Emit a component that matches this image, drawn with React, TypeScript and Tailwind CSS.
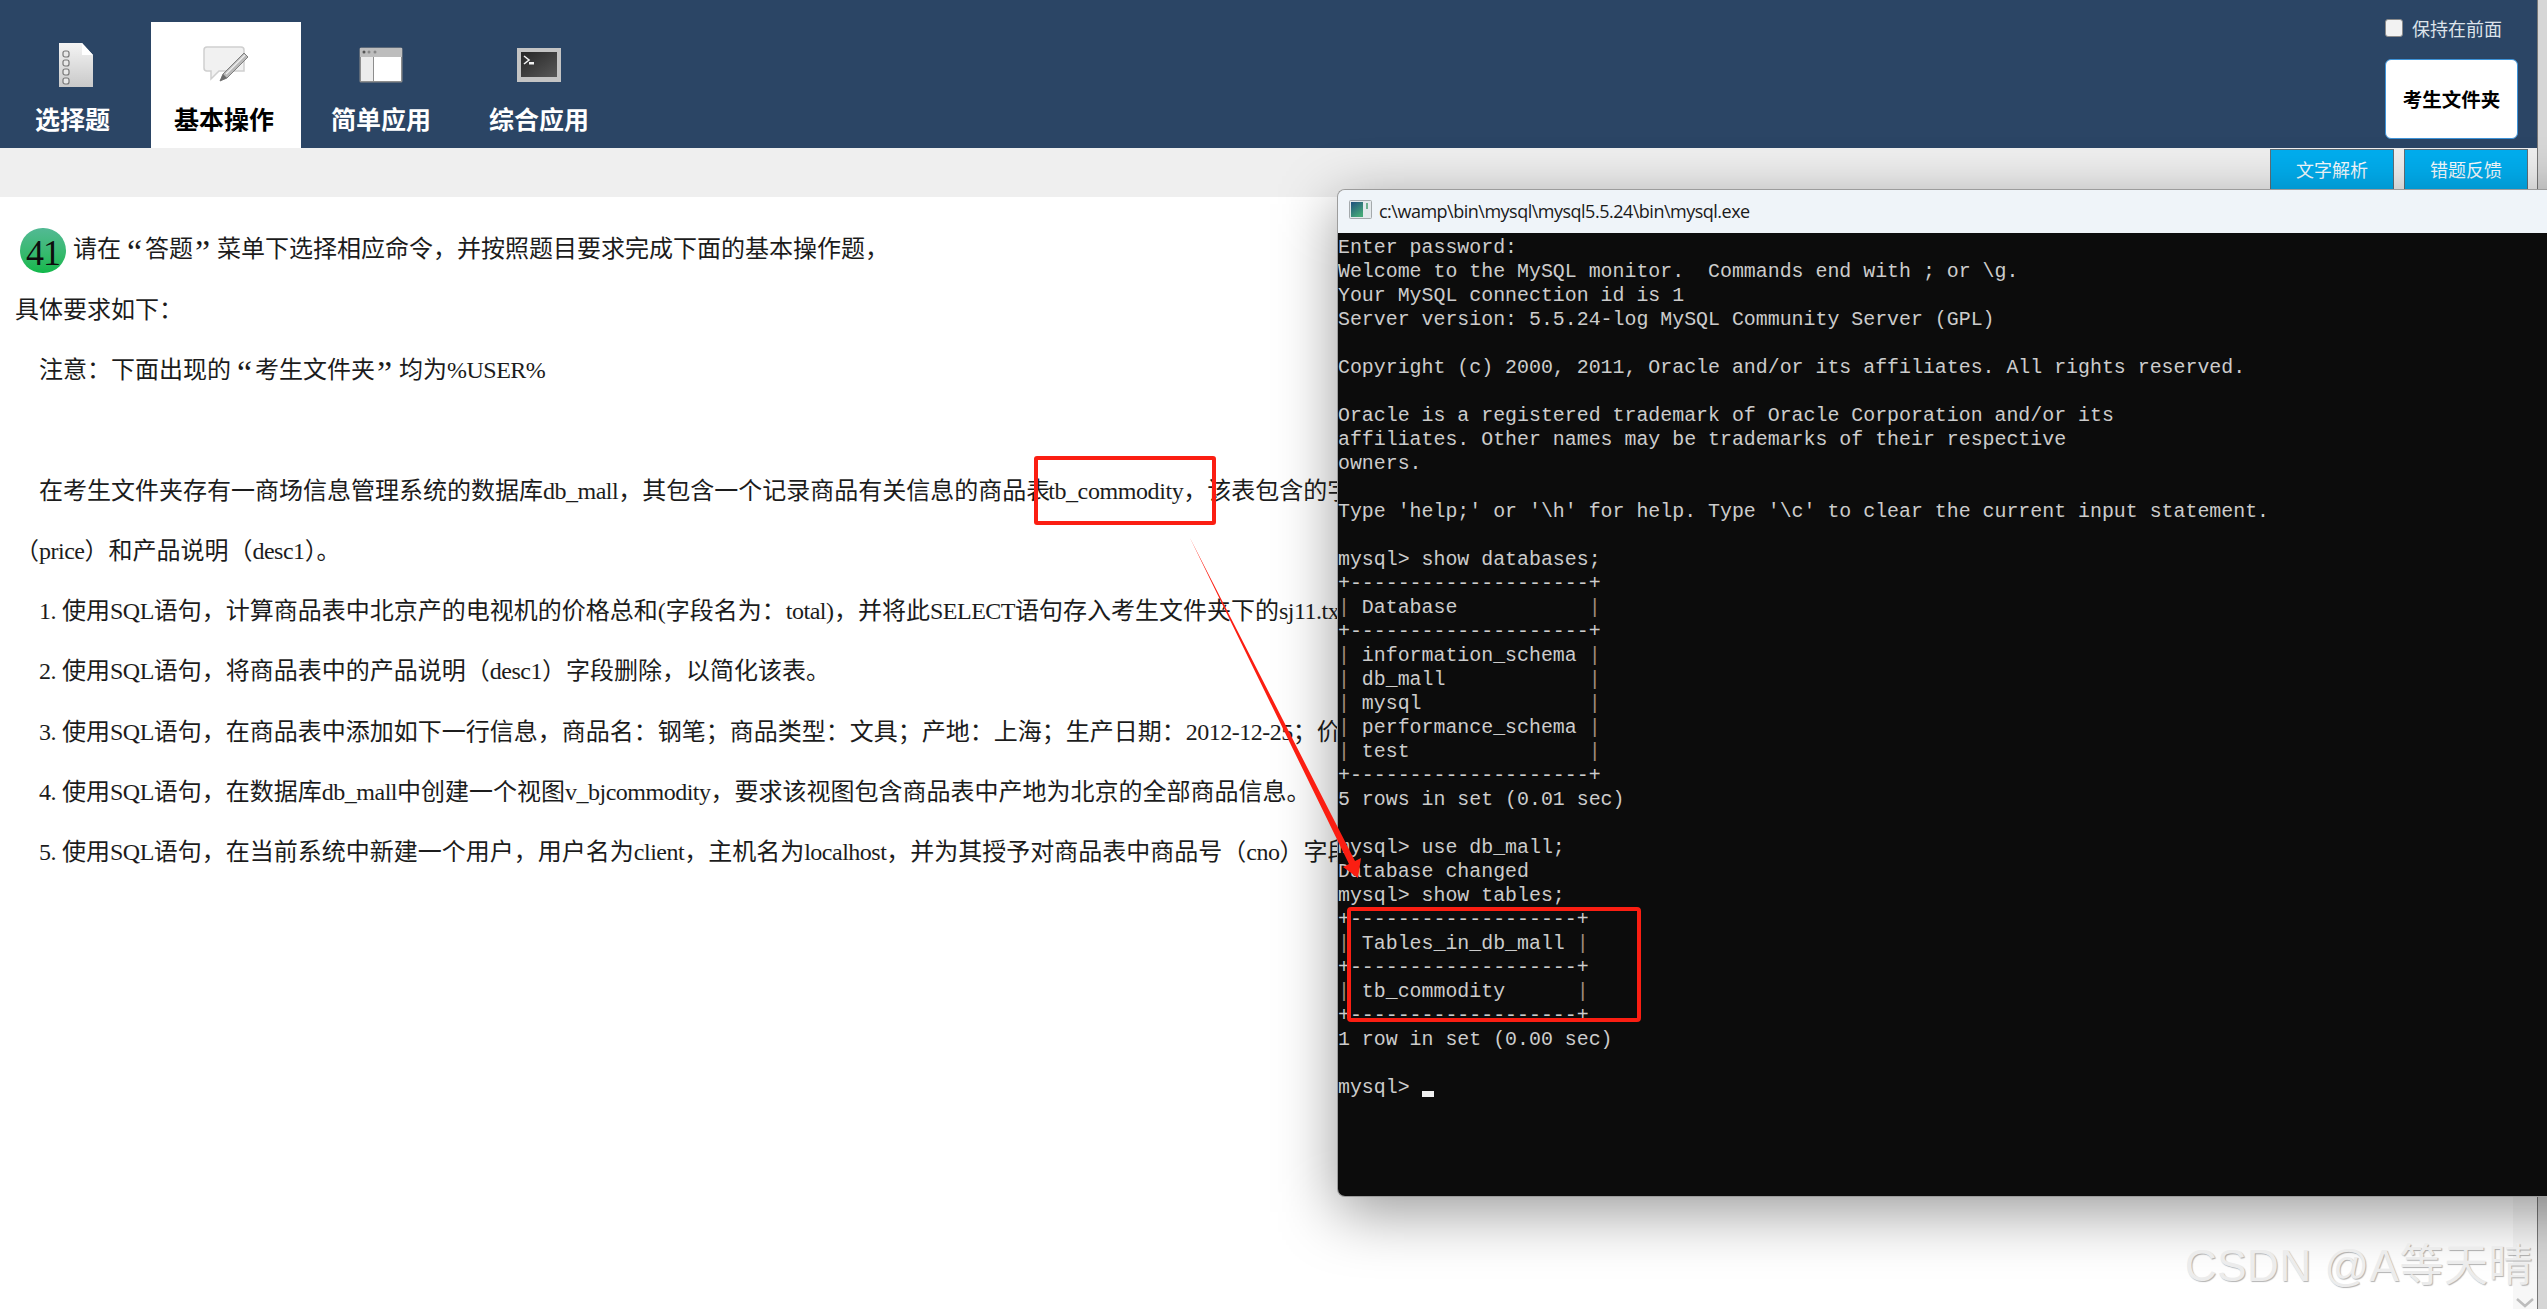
const terminalLines = [
  "Enter password:",
  "Welcome to the MySQL monitor.  Commands end with ; or \\g.",
  "Your MySQL connection id is 1",
  "Server version: 5.5.24-log MySQL Community Server (GPL)",
  "",
  "Copyright (c) 2000, 2011, Oracle and/or its affiliates. All rights reserved.",
  "",
  "Oracle is a registered trademark of Oracle Corporation and/or its",
  "affiliates. Other names may be trademarks of their respective",
  "owners.",
  "",
  "Type 'help;' or '\\h' for help. Type '\\c' to clear the current input statement.",
  "",
  "mysql> show databases;",
  "+--------------------+",
  "| Database           |",
  "+--------------------+",
  "| information_schema |",
  "| db_mall            |",
  "| mysql              |",
  "| performance_schema |",
  "| test               |",
  "+--------------------+",
  "5 rows in set (0.01 sec)",
  "",
  "mysql> use db_mall;",
  "Database changed",
  "mysql> show tables;",
  "+-------------------+",
  "| Tables_in_db_mall |",
  "+-------------------+",
  "| tb_commodity      |",
  "+-------------------+",
  "1 row in set (0.00 sec)",
  "",
];

const questionLines = [
  "具体要求如下：",
  "　注意：下面出现的“考生文件夹”均为%USER%",
  "\u00a0",
  "　在考生文件夹存有一商场信息管理系统的数据库db_mall，其包含一个记录商品有关信息的商品表tb_commodity，该表包含的字",
  "（price）和产品说明（desc1）。",
  "　1. 使用SQL语句，计算商品表中北京产的电视机的价格总和(字段名为：total)，并将此SELECT语句存入考生文件夹下的sj11.txt",
  "　2. 使用SQL语句，将商品表中的产品说明（desc1）字段删除，以简化该表。",
  "　3. 使用SQL语句，在商品表中添加如下一行信息，商品名：钢笔；商品类型：文具；产地：上海；生产日期：2012-12-25；价",
  "　4. 使用SQL语句，在数据库db_mall中创建一个视图v_bjcommodity，要求该视图包含商品表中产地为北京的全部商品信息。",
  "　5. 使用SQL语句，在当前系统中新建一个用户，用户名为client，主机名为localhost，并为其授予对商品表中商品号（cno）字段",
];

function DocIcon() {
  return (
    <svg className="blur-[0.5px]" width="36" height="46" viewBox="0 0 36 46">
      <defs>
        <linearGradient id="docFill" x1="0" y1="0" x2="0" y2="1">
          <stop offset="0" stopColor="#f4f4f4" />
          <stop offset="1" stopColor="#c9c9c9" />
        </linearGradient>
      </defs>
      <path d="M1 1H24L35 13V45H1Z" fill="url(#docFill)" />
      <path d="M24 1L35 13H24Z" fill="#ffffff" />
      {[9, 18, 27, 36].map((y) => (
        <rect key={y} x="5" y={y} width="6" height="6" rx="2" fill="#e8e8e8" stroke="#777" strokeWidth="1.2" />
      ))}
    </svg>
  );
}

function NoteIcon() {
  return (
    <svg className="blur-[0.5px]" width="46" height="38" viewBox="0 0 46 38">
      <path d="M4 1H38Q41 1 41 4V25H16L8 33V25H4Q1 25 1 22V4Q1 1 4 1Z" fill="#f1f1f1" stroke="#cfcfcf" strokeWidth="1.5" />
      <path d="M17 35L20 28L41 7L45 11L24 32Z" fill="#b9b9b9" stroke="#808080" strokeWidth="1" />
      <path d="M17 35L20 28L24 32Z" fill="#6a6a6a" />
      <path d="M23 28L42 9" stroke="#eeeeee" strokeWidth="1.5" />
    </svg>
  );
}

function WindowIcon() {
  return (
    <svg className="blur-[0.5px]" width="44" height="36" viewBox="0 0 44 36">
      <rect x="0.5" y="0.5" width="43" height="35" rx="1.5" fill="#8d8d8d" />
      <rect x="1" y="1" width="42" height="9" fill="#bdbdbd" />
      <circle cx="5" cy="5" r="1.5" fill="#555" />
      <circle cx="10" cy="5" r="1.5" fill="#888" />
      <circle cx="16" cy="5" r="1.5" fill="#888" />
      <rect x="2" y="10" width="12" height="24" fill="#ececec" />
      <rect x="15" y="10" width="27" height="24" fill="#ffffff" />
    </svg>
  );
}

function TerminalIcon() {
  return (
    <svg className="blur-[0.5px]" width="44" height="34" viewBox="0 0 44 34">
      <defs>
        <linearGradient id="termFill" x1="0" y1="0" x2="1" y2="1">
          <stop offset="0" stopColor="#262626" />
          <stop offset="1" stopColor="#585858" />
        </linearGradient>
      </defs>
      <rect width="44" height="34" fill="#c4c4c4" />
      <rect x="4" y="4" width="36" height="25" fill="url(#termFill)" />
      <path d="M7 8L12 12L7 16" fill="none" stroke="#f2f2f2" strokeWidth="1.6" />
      <rect x="12" y="14" width="5" height="2.5" fill="#f2f2f2" />
    </svg>
  );
}

function ConsoleIcon() {
  return (
    <svg className="mb-[4px]" width="23" height="19" viewBox="0 0 23 19">
      <defs>
        <linearGradient id="consoleFill" x1="0" y1="0" x2="0.6" y2="1">
          <stop offset="0" stopColor="#1f4f7d" />
          <stop offset="1" stopColor="#45a878" />
        </linearGradient>
      </defs>
      <rect x="0.5" y="0.5" width="22" height="18" rx="1" fill="#e4e9ec" stroke="#a4a9ac" />
      <rect x="2" y="2" width="12" height="15" fill="url(#consoleFill)" />
      <rect x="17" y="3" width="2" height="6" fill="#6fb08f" />
    </svg>
  );
}

function NavTab({ label, width, labelClass, active, children }: { label: string; width: string; labelClass?: string; active?: boolean; children: React.ReactNode }) {
  return (
    <div className={`${width} ${active ? "bg-white text-black" : "text-white"} h-[126px] flex flex-col items-center pt-[20px]`}>
      <div className="h-[46px] flex items-center justify-center">{children}</div>
      <div className={`mt-[15px] text-[25px] leading-[30px] font-bold ${labelClass ?? ""}`}>{label}</div>
    </div>
  );
}

// latin runs sit tighter than the default metrics, quotes take a full cell
function RichText({ text }: { text: string }) {
  const parts = text.split(/([“”]|[A-Za-z0-9_.%\-]+)/);
  return (
    <>
      {parts.map((part, i) => {
        if (part === "“") {
          return <span key={i} className="inline-block w-[24px] text-right pr-[3px] text-[34px] leading-none align-[-6px]">{part}</span>;
        }
        if (part === "”") {
          return <span key={i} className="inline-block w-[24px] text-left pl-[2px] text-[34px] leading-none align-[-6px]">{part}</span>;
        }
        if (part === "tb_commodity") {
          return <span key={i} className="-ml-[2px] tracking-[-0.4px]">{part}</span>;
        }
        if (/^[A-Za-z0-9_.%\-]+$/.test(part)) {
          return <span key={i} className="tracking-[-0.5px]">{part}</span>;
        }
        return part;
      })}
    </>
  );
}

function TerminalLine({ text }: { text: string }) {
  const parts = text.split(/(\|)/);
  return (
    <div className="h-[24px]">
      {parts.map((part, i) => (part === "|" ? <span key={i} className="text-[#a08c7c]">|</span> : part))}
    </div>
  );
}

export default function App() {
  return (
    <div className="relative w-[2547px] h-[1309px] overflow-hidden flex bg-white font-['Liberation_Serif','Noto_Sans_CJK_SC',serif] text-[#1c1c1c]">
      <div className="w-[2537px] flex flex-col">
        {/* Top nav */}
        <header className="h-[148px] bg-[#2b4565] flex items-end justify-between font-['Noto_Sans_CJK_SC',sans-serif]">
          <nav className="flex">
            <NavTab label="选择题" width="w-[151px]" labelClass="-ml-[6px]"><DocIcon /></NavTab>
            <NavTab label="基本操作" width="w-[150px]" labelClass="-ml-[4px]" active><NoteIcon /></NavTab>
            <NavTab label="简单应用" width="w-[160px]"><WindowIcon /></NavTab>
            <NavTab label="综合应用" width="w-[156px]"><TerminalIcon /></NavTab>
          </nav>
          <div className="w-[133px] mr-[19px] mb-[9px] flex flex-col">
            <label className="flex items-center gap-[9px] text-[18px] leading-[20px] text-[#dde3ea]">
              <span className="w-[18px] h-[18px] rounded-[3px] bg-[#f2f2f2] border border-[#8a8a8a]" />
              保持在前面
            </label>
            <button className="mt-[21px] h-[80px] rounded-[6px] bg-white border border-[#3d93d8] text-[19.5px] font-bold text-black">
              考生文件夹
            </button>
          </div>
        </header>

        {/* Gray toolbar */}
        <div className="h-[49px] bg-[#efefef] flex justify-end items-start pt-[1px] pr-[9px] gap-[10px] font-['Noto_Sans_CJK_SC',sans-serif]">
          <button className="w-[124px] h-[41px] bg-[#00aeef] border border-[#5f6f78] text-[18px] text-[#f4fbff]">文字解析</button>
          <button className="w-[124px] h-[41px] bg-[#00aeef] border border-[#5f6f78] text-[18px] text-[#f4fbff]">错题反馈</button>
        </div>

        {/* Question text */}
        <main className="flex-1 flex min-h-0">
          <div className="flex-1 min-w-0 overflow-hidden pt-[23px] pl-[15px] text-[24px]">
            <div className="h-[60.2px] flex items-center -ml-[15px] pl-[20px]">
              <span className="w-[46px] h-[45px] rounded-full bg-gradient-to-b from-[#52b994] to-[#0fb84a] flex items-center justify-center text-[36px] leading-[45px] pt-[6px] tracking-[-1px] text-[#0d0d0d]">41</span>
              <span className="ml-[7px] whitespace-pre">
                <RichText text="请在“答题”菜单下选择相应命令，并按照题目要求完成下面的基本操作题，" />
              </span>
            </div>
            {questionLines.map((line, i) => (
              <div key={i} className="h-[60.2px] leading-[60.2px] whitespace-pre">
                <RichText text={line} />
              </div>
            ))}
          </div>
          <div className="w-[24px] bg-[#f7f7f7] flex flex-col justify-end items-center pb-[1px]">
            <svg width="18" height="10" viewBox="0 0 18 10">
              <path d="M1 1L9 8L17 1" fill="none" stroke="#bdbdbd" strokeWidth="2.5" />
            </svg>
          </div>
        </main>
      </div>

      {/* Right edge strip */}
      <div className="w-[10px] bg-[#d6d6d6] border-l border-[#777777]" />

      {/* Window shadow */}
      <div className="absolute left-[1337px] top-[204px] w-[1300px] h-[1008px] pointer-events-none bg-black/40 blur-[30px]" />

      {/* Floating console window */}
      <section className="absolute left-[1337px] top-[189px] w-[1210px] h-[1008px] flex flex-col rounded-l-[8px] overflow-hidden border-l border-t border-b border-[#9c9c9c]">
        <div className="h-[43px] shrink-0 bg-[#eff4f9] flex items-center pl-[11px] gap-[7px] font-['Open_Sans',sans-serif] text-[#1a1a1a]">
          <ConsoleIcon />
          <span className="text-[18px] tracking-[-0.5px]">c:\wamp\bin\mysql\mysql5.5.24\bin\mysql.exe</span>
        </div>
        <pre className="flex-1 bg-[#0c0c0c] pt-[3px] text-[19.9px] leading-[24px] text-[#cccccc] font-['Liberation_Mono',monospace]">
          {terminalLines.map((line, i) => (
            <TerminalLine key={i} text={line} />
          ))}
          <div className="h-[24px]">
            mysql&gt; <span className="inline-block w-[12px] h-[6px] bg-[#f0f0f0] align-[-4px]" />
          </div>
        </pre>
      </section>

      {/* Annotations */}
      <div className="absolute left-[1034px] top-[456px] w-[182px] h-[69px] border-[4px] border-[#fb1e12] rounded-[3px]" />
      <div className="absolute left-[1347px] top-[907px] w-[294px] h-[115px] border-[4px] border-[#fb1e12] rounded-[4px]" />
      <svg className="absolute left-0 top-0 pointer-events-none" width="2547" height="1309">
        <polygon points="1190,538 1355,861 1361,858 1358,878 1343,867 1349,864" fill="#fb1e12" />
      </svg>

      {/* Watermark */}
      <div className="absolute left-[2185px] top-[1238px] whitespace-pre text-[44px] leading-[56px] tracking-[0.5px] text-[#ececec] font-['Liberation_Sans','Noto_Sans_CJK_SC',sans-serif] [text-shadow:1px_1px_1px_rgba(0,0,0,0.3)]">
        CSDN @A等天晴
      </div>
    </div>
  );
}
